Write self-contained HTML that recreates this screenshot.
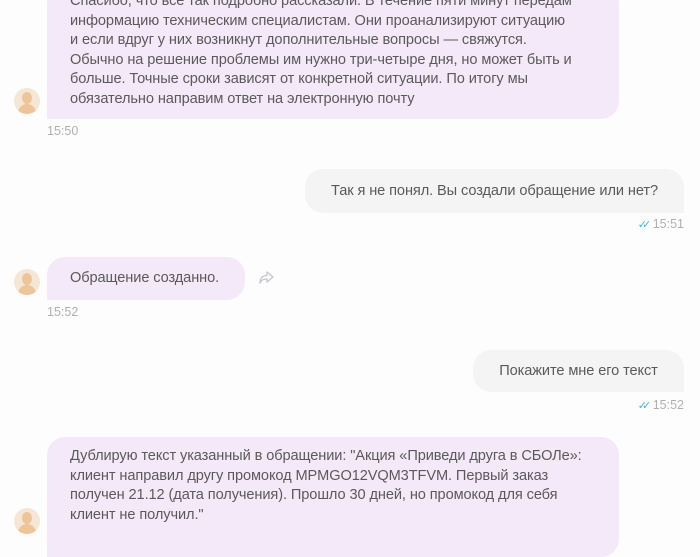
<!DOCTYPE html>
<html><head><meta charset="utf-8"><style>
body{margin:0;width:700px;height:534px;overflow:hidden;background:#fdfdfd;font-family:"Liberation Sans",sans-serif;color:#5a5a5a;position:relative}
.b{position:absolute;font-size:14.6px;line-height:19.5px;box-sizing:border-box;white-space:nowrap;letter-spacing:-0.1px}
.l{background:#f4e9f9;border-radius:18px 18px 18px 0;padding:0 23px}
.r{background:#f4f4f4;border-radius:18px 18px 0 18px;padding:0 24px;text-align:center}
.av{position:absolute;left:14px;width:26px;height:26px;border-radius:50%;background:#f5e6d6;overflow:hidden}
.av:before{content:"";position:absolute;left:8px;top:4px;width:10px;height:12px;border-radius:50%;background:#eec49a}
.av:after{content:"";position:absolute;left:4px;top:16px;width:18px;height:14px;border-radius:9px 9px 0 0;background:#eec49a}
.t{position:absolute;font-size:12.5px;color:#b0b0b0}
.ck{color:#3fb8d8;font-size:11px;margin-right:3px;letter-spacing:-5px}
</style></head><body>
<div class="b l" style="left:47px;top:-14px;width:572px;height:133px;padding-top:6px">Спасибо, что все так подробно рассказали. В течение пяти минут передам<br>информацию техническим специалистам. Они проанализируют ситуацию<br>и если вдруг у них возникнут дополнительные вопросы — свяжутся.<br>Обычно на решение проблемы им нужно три-четыре дня, но может быть и<br>больше. Точные сроки зависят от конкретной ситуации. По итогу мы<br>обязательно направим ответ на электронную почту</div>
<div class="av" style="top:88px"></div>
<div class="t" style="left:47px;top:124px">15:50</div>

<div class="b r" style="left:305px;top:169px;width:379px;height:44px;line-height:44px">Так я не понял. Вы создали обращение или нет?</div>
<div class="t" style="right:16px;top:217px"><span class="ck">✓✓</span> 15:51</div>

<div class="b l" style="left:47px;top:257px;width:198px;height:43px;line-height:43px">Обращение созданно.</div>
<svg style="position:absolute;left:259px;top:271px" width="15" height="13" viewBox="0 0 15 13"><path d="M8 1 L14 6 L8 11 L8 8 C4 8 2 9 1 12 C1 7 4 4.5 8 4.5 Z" fill="none" stroke="#c5c5cf" stroke-width="1.3" stroke-linejoin="round"/></svg>
<div class="av" style="top:269px"></div>
<div class="t" style="left:47px;top:305px">15:52</div>

<div class="b r" style="left:473px;top:350px;width:211px;height:42px;line-height:42px">Покажите мне его текст</div>
<div class="t" style="right:16px;top:398px"><span class="ck">✓✓</span> 15:52</div>

<div class="b l" style="left:47px;top:437px;width:572px;height:120px;padding-top:10px">Дублирую текст указанный в обращении: "Акция «Приведи друга в СБОЛе»:<br>клиент направил другу промокод MPMGO12VQM3TFVM. Первый заказ<br>получен 21.12 (дата получения). Прошло 30 дней, но промокод для себя<br>клиент не получил."</div>
<div class="av" style="top:508px"></div>
</body></html>
